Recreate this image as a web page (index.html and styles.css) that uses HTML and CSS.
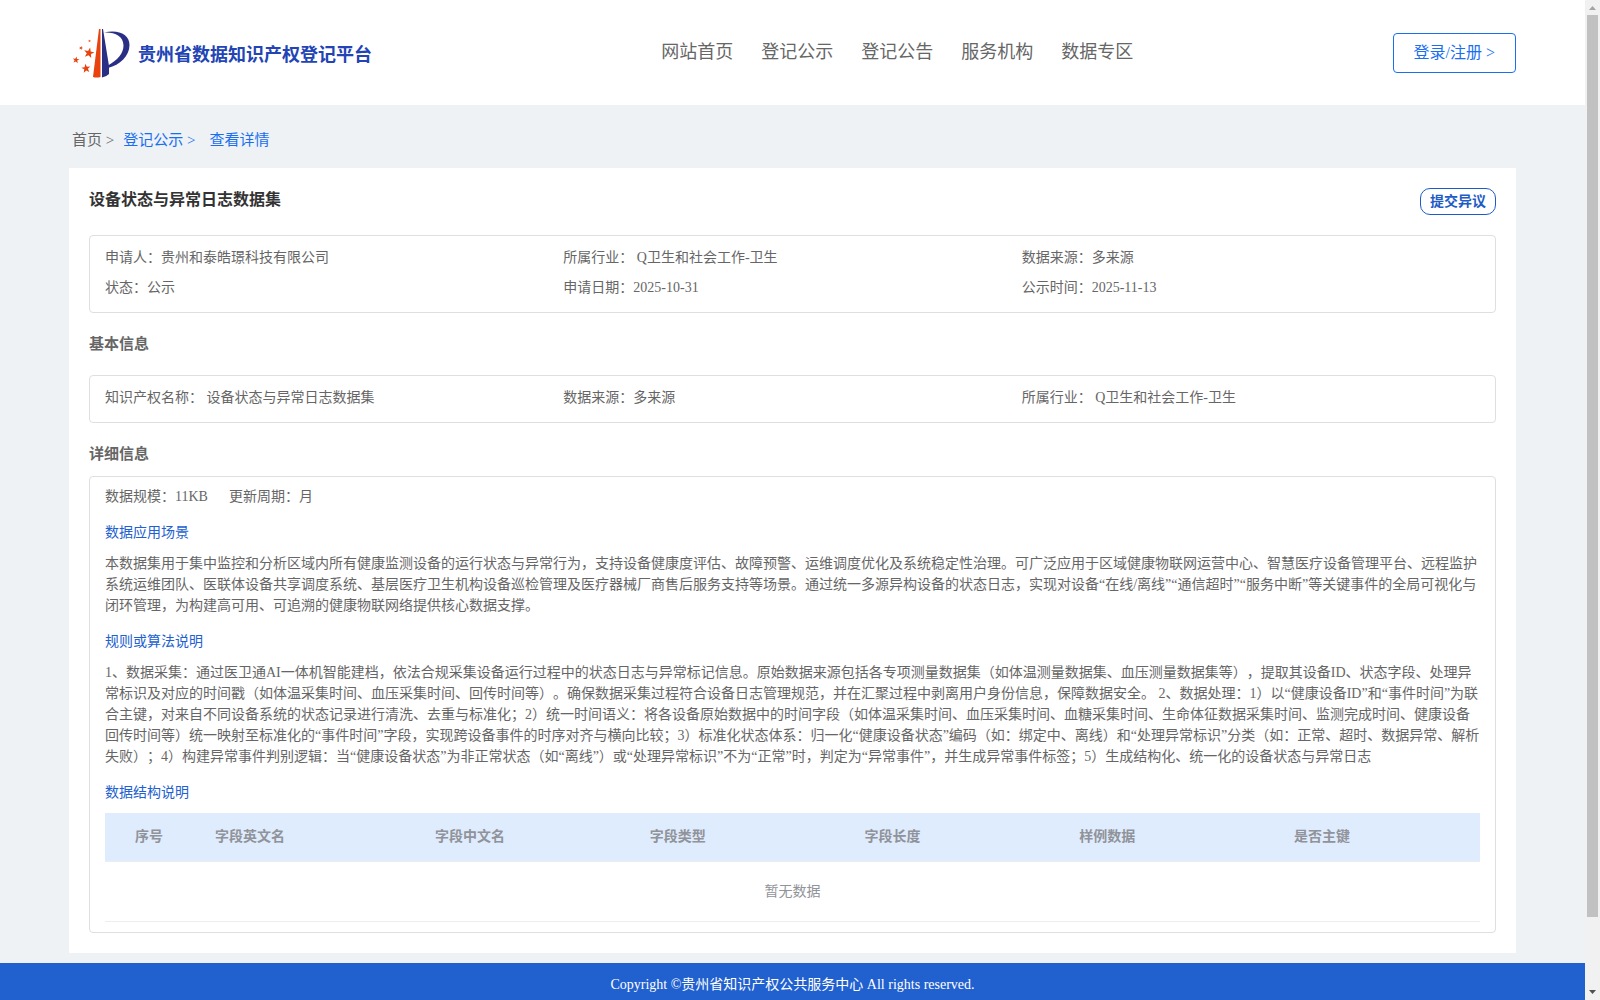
FILE: index.html
```html
<!DOCTYPE html>
<html lang="zh-CN">
<head>
    <meta charset="UTF-8">
    <meta name="viewport" content="width=device-width, initial-scale=1.0">
    <title>贵州省数据知识产权登记平台</title>
    <link rel="stylesheet" href="styles.css">
</head>
<body>
    <header class="header">
        <a class="brand" href="#">
            <svg class="logo" viewBox="0 0 60 50" aria-hidden="true">
                <defs>
                    <path id="star" d="M0-10L2.400-3.200 9.500-3.100 3.800 1.200 5.900 8.100 0 4 -5.900 8.100 -3.800 1.200 -9.500-3.100 -2.400-3.200z"/>
                </defs>
                <path fill="#e8420f" d="M28 1h1.500v48q-4 1-7.500 0z"/>
                <path fill="#2a2f86" d="M31 1h1L38 38v8q-3 3-7 3.500z"/>
                <path fill="#2a2f86" d="M33 4.500C47 1 58.500 6 58.500 17C58.500 28 49 37 37 40v-2.500C47 32 52.500 25 52.500 17.500C52.500 8 44 4 33 4.500z"/>
                <g fill="#e8420f">
                    <use href="#star" transform="translate(18 25) rotate(12) scale(.55)"/>
                    <use href="#star" transform="translate(15 40.500) rotate(-8) scale(.48)"/>
                    <use href="#star" transform="translate(5 32) rotate(8) scale(.36)"/>
                    <use href="#star" transform="translate(10 20) rotate(20) scale(.22)"/>
                    <use href="#star" transform="translate(18.500 13) scale(.15)"/>
                </g>
            </svg>
            <span>贵州省数据知识产权登记平台</span>
        </a>
        <nav class="nav">
            <a href="#">网站首页</a>
            <a href="#">登记公示</a>
            <a href="#">登记公告</a>
            <a href="#">服务机构</a>
            <a href="#">数据专区</a>
        </nav>
        <button class="login" type="button">登录/注册 &gt;</button>
    </header>

    <main class="main">
        <div class="breadcrumb">
            <a class="home" href="#">首页 &gt;</a>
            <a href="#">登记公示 &gt;</a>
            <a class="current" href="#">查看详情</a>
        </div>

        <section class="card">
            <div class="card-head">
                <h1>设备状态与异常日志数据集</h1>
                <button class="objection" type="button">提交异议</button>
            </div>

            <div class="box info">
                <p>申请人：贵州和泰皓璟科技有限公司</p>
                <p>所属行业： Q卫生和社会工作-卫生</p>
                <p>数据来源：多来源</p>
                <p>状态：公示</p>
                <p>申请日期：2025-10-31</p>
                <p>公示时间：2025-11-13</p>
            </div>

            <h2>基本信息</h2>
            <div class="box info">
                <p>知识产权名称： 设备状态与异常日志数据集</p>
                <p>数据来源：多来源</p>
                <p>所属行业： Q卫生和社会工作-卫生</p>
            </div>

            <h2 class="detail-title">详细信息</h2>
            <div class="box detail">
                <div class="scale">
                    <span>数据规模：11KB</span>
                    <span>更新周期：月</span>
                </div>

                <h3>数据应用场景</h3>
                <p>本数据集用于集中监控和分析区域内所有健康监测设备的运行状态与异常行为，支持设备健康度评估、故障预警、运维调度优化及系统稳定性治理。可广泛应用于区域健康物联网运营中心、智慧医疗设备管理平台、远程监护系统运维团队、医联体设备共享调度系统、基层医疗卫生机构设备巡检管理及医疗器械厂商售后服务支持等场景。通过统一多源异构设备的状态日志，实现对设备“在线/离线”“通信超时”“服务中断”等关键事件的全局可视化与闭环管理，为构建高可用、可追溯的健康物联网络提供核心数据支撑。</p>

                <h3>规则或算法说明</h3>
                <p>1、数据采集：通过医卫通AI一体机智能建档，依法合规采集设备运行过程中的状态日志与异常标记信息。原始数据来源包括各专项测量数据集（如体温测量数据集、血压测量数据集等），提取其设备ID、状态字段、处理异常标识及对应的时间戳（如体温采集时间、血压采集时间、回传时间等）。确保数据采集过程符合设备日志管理规范，并在汇聚过程中剥离用户身份信息，保障数据安全。 2、数据处理：1）以“健康设备ID”和“事件时间”为联合主键，对来自不同设备系统的状态记录进行清洗、去重与标准化；2）统一时间语义：将各设备原始数据中的时间字段（如体温采集时间、血压采集时间、血糖采集时间、生命体征数据采集时间、监测完成时间、健康设备回传时间等）统一映射至标准化的“事件时间”字段，实现跨设备事件的时序对齐与横向比较；3）标准化状态体系：归一化“健康设备状态”编码（如：绑定中、离线）和“处理异常标识”分类（如：正常、超时、数据异常、解析失败）；4）构建异常事件判别逻辑：当“健康设备状态”为非正常状态（如“离线”）或“处理异常标识”不为“正常”时，判定为“异常事件”，并生成异常事件标签；5）生成结构化、统一化的设备状态与异常日志</p>

                <h3>数据结构说明</h3>
                <table class="fields">
                    <thead>
                        <tr>
                            <th class="col-index">序号</th>
                            <th class="col-name">字段英文名</th>
                            <th>字段中文名</th>
                            <th>字段类型</th>
                            <th>字段长度</th>
                            <th>样例数据</th>
                            <th class="col-key">是否主键</th>
                        </tr>
                    </thead>
                    <tbody>
                        <tr>
                            <td colspan="7">暂无数据</td>
                        </tr>
                    </tbody>
                </table>
            </div>
        </section>
    </main>

    <footer class="footer">Copyright ©贵州省知识产权公共服务中心 All rights reserved.</footer>

    <div class="scrollbar" aria-hidden="true">
        <svg class="arrow-up" viewBox="0 0 15 15"><path d="M4 10h7L7.500 6z"/></svg>
        <div class="thumb"></div>
        <svg viewBox="0 0 15 15"><path d="M4 5h7L7.500 9z"/></svg>
    </div>
</body>
</html>
```
FILE: styles.css
```css
* {
    box-sizing: border-box;
}

body {
    margin: 0;
    padding-right: 15px;
    height: 100vh;
    overflow: hidden;
    background-color: #eef2f5;
    color: #666;
    font-family: "Liberation Serif", "Noto Sans CJK SC", serif;
    font-size: 14px;
    line-height: 21px;
    text-spacing-trim: space-all;
}

h1, h2, h3, p {
    margin: 0;
}

a {
    color: inherit;
    text-decoration: none;
}

button {
    font-family: inherit;
    background-color: #fff;
    cursor: pointer;
}

.header {
    display: flex;
    justify-content: space-between;
    align-items: center;
    height: 105px;
    padding: 0 69px;
    background-color: #fff;
}

.brand {
    display: flex;
    align-items: center;
    gap: 7px;
    padding-left: 2px;
    color: #2244b4;
    font-size: 18px;
    font-weight: bold;
}

.brand span {
    padding-top: 5px;
}

.logo {
    width: 60px;
    height: 50px;
}

.nav {
    display: flex;
    gap: 28px;
    margin-left: 30px;
    font-size: 18px;
}

.login {
    height: 40px;
    padding: 0 20px 3px;
    border: 1px solid #1a6ff0;
    border-radius: 4px;
    color: #1a6ff0;
    font-size: 16px;
}

.main {
    padding: 0 69px 10px;
}

.breadcrumb {
    display: flex;
    gap: 9px;
    height: 63px;
    padding: 25px 3px 0;
    color: #1a6ff0;
    font-size: 15px;
}

.home {
    color: #666;
}

.current {
    padding-left: 5px;
}

.card {
    padding: 20px;
    background-color: #fff;
}

.card-head {
    display: flex;
    justify-content: space-between;
    align-items: flex-start;
    height: 47px;
}

h1 {
    color: #333;
    font-size: 16px;
    line-height: 24px;
}

.objection {
    height: 27px;
    padding: 0 9px 3px;
    border: 1px solid #1e5bc6;
    border-radius: 10px;
    color: #1e5bc6;
    font-size: 14px;
    font-weight: bold;
}

h2 {
    padding: 20px 0;
    font-size: 15px;
    line-height: 22px;
}

.detail-title {
    padding-bottom: 11px;
}

.box {
    padding: 9px 15px 10px;
    border: 1px solid #dddfe0;
    border-radius: 4px;
}

.info {
    display: grid;
    grid-template-columns: repeat(3, 1fr);
    padding: 7px 15px 9px;
    line-height: 30px;
}

.scale {
    display: flex;
    gap: 21px;
}

h3 {
    padding: 15px 0 10px;
    color: #2160cf;
    font-size: 14px;
    font-weight: normal;
}

.fields {
    width: 100%;
    table-layout: fixed;
    border-collapse: collapse;
    color: #909399;
}

.fields th {
    height: 48px;
    padding: 0 10px;
    border-bottom: 1px solid #ebeef0;
    background-color: #dfecfe;
    text-align: left;
}

.fields td {
    height: 60px;
    padding: 0;
    border-bottom: 1px solid #ebeef0;
    text-align: center;
}

.fields .col-index {
    width: 100px;
    padding-left: 30px;
}

.fields .col-name {
    width: 220px;
}

.fields .col-key {
    width: 196px;
}

.footer {
    height: 60px;
    padding-top: 11px;
    background-color: #2160cf;
    color: #fff;
    text-align: center;
}

.scrollbar {
    position: fixed;
    top: 0;
    right: 0;
    bottom: 0;
    display: flex;
    flex-direction: column;
    width: 15px;
    background-color: #f1f1f1;
    fill: #505050;
}

.scrollbar svg {
    width: 15px;
    height: 15px;
}

.scrollbar .arrow-up {
    fill: #a3a3a3;
}

.thumb {
    flex: 1;
    margin: 0 2px 68px;
    background-color: #c1c1c1;
}
```
